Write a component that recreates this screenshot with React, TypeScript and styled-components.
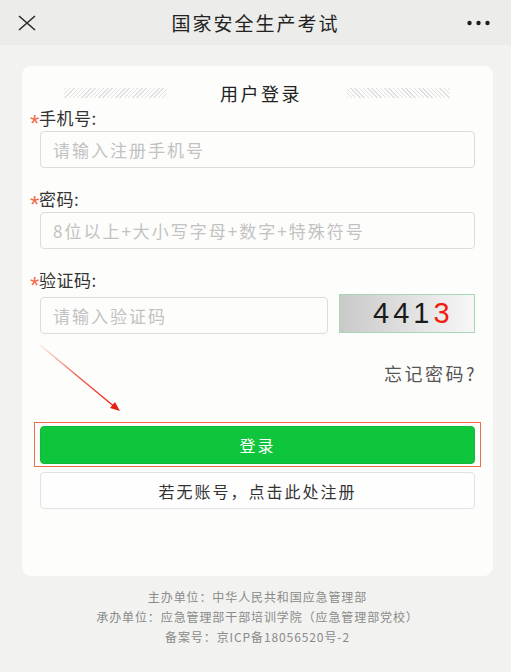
import React from "react";
import styled, { createGlobalStyle } from "styled-components";

const Global = createGlobalStyle`
  html, body { margin: 0; padding: 0; background: #f2f2f0; }
  body { font-family: "Noto Sans CJK SC", "Noto Sans", sans-serif; color: #333; }
  * { box-sizing: border-box; }
  input::placeholder { color: #c2c2c2; }
`;

const Page = styled.div`
  width: 511px;
  min-height: 672px;
  background: #f2f2f0;
`;

const TopBar = styled.div`
  height: 45px;
  background: #ececea;
  display: grid;
  grid-template-columns: 60px 1fr 60px;
  align-items: center;
`;

const IconBtn = styled.div<{ $align: "start" | "end" }>`
  display: flex;
  justify-content: ${(p) => (p.$align === "start" ? "flex-start" : "flex-end")};
  padding: ${(p) => (p.$align === "start" ? "0 0 0 17px" : "0 21px 0 0")};
  align-items: center;
`;

const BarTitle = styled.div`
  text-align: center;
  font-size: 19px;
  letter-spacing: 2px;
  color: #222;
  line-height: 45px;
`;

const Content = styled.div`
  padding: 21px 18px 0 22px;
`;

const Card = styled.div`
  position: relative;
  background: #fdfdfb;
  border-radius: 9px;
  padding: 14px 18px 67px 8px;
`;

const TitleRow = styled.div`
  display: flex;
  align-items: center;
  justify-content: space-between;
  height: 26px;
  padding: 0 25px 0 34px;
`;

const Hatch = styled.div<{ $dir: "left" | "right" }>`
  width: 103px;
  height: 10px;
  background: repeating-linear-gradient(
    ${(p) => (p.$dir === "left" ? "-45deg" : "45deg")},
    #e0e0e0 0 1px,
    transparent 1px 3px
  );
`;

const CardTitle = styled.div`
  font-size: 18px;
  letter-spacing: 2.5px;
  color: #222;
  line-height: 26px;
  padding-left: 8px;
`;

const Label = styled.div<{ $gap: number }>`
  margin-top: ${(p) => p.$gap}px;
  font-size: 17px;
  line-height: 22px;
  height: 22px;
  color: #333;
  letter-spacing: 0.5px;
  display: flex;
  align-items: center;
`;

const Star = styled.span`
  color: #f26a4b;
  font-family: "Liberation Sans", sans-serif;
  font-size: 24px;
  line-height: 22px;
  height: 22px;
  width: 9px;
  padding-top: 6px;
  display: inline-block;
  overflow: visible;
`;

const Field = styled.input<{ $grow?: boolean }>`
  display: block;
  width: ${(p) => (p.$grow ? "auto" : "435px")};
  flex: ${(p) => (p.$grow ? "1" : "none")};
  height: 37px;
  margin: 2px 0 0 10px;
  border: 1px solid #dcdcdc;
  border-radius: 4px;
  background: #fdfdfb;
  padding: 0 12px;
  font-family: inherit;
  font-size: 17px;
  letter-spacing: 2px;
  outline: none;
`;

const CodeRow = styled.div`
  display: flex;
  align-items: flex-end;
  gap: 11px;
  margin-top: 3px;
  & > input { margin-top: 0; }
`;

const Captcha = styled.div`
  width: 136px;
  height: 39px;
  margin-bottom: 1px;
  border: 1px solid #a6d8b5;
  background: linear-gradient(90deg, #c9c9c9 0%, #e2e2e2 55%, #f7f7f7 100%);
  font-family: "Liberation Sans", "DejaVu Sans", sans-serif;
  font-size: 29px;
  letter-spacing: 4px;
  color: #1a1a1a;
  line-height: 37px;
  padding-left: 33px;
  white-space: nowrap;
`;

const Red = styled.span`
  color: #f01e0e;
`;

const Forgot = styled.div`
  margin-top: 27px;
  text-align: right;
  font-size: 18px;
  letter-spacing: 2.5px;
  line-height: 24px;
  color: #555;
  margin-right: -2px;
`;

const LoginWrap = styled.div`
  position: relative;
  margin: 41px 0 0 10px;
`;

const Highlight = styled.div`
  position: absolute;
  left: -6px;
  right: -6px;
  top: -4px;
  bottom: -3px;
  border: 1.5px solid #f2684e;
  pointer-events: none;
`;

const Btn = styled.button<{ $primary?: boolean }>`
  display: block;
  width: 435px;
  height: ${(p) => (p.$primary ? "38px" : "37px")};
  border-radius: 4px;
  border: 1px solid ${(p) => (p.$primary ? "#10b93a" : "#e2e2e2")};
  background: ${(p) => (p.$primary ? "#0fc53c" : "#fefefe")};
  color: ${(p) => (p.$primary ? "#fff" : "#333")};
  font-family: inherit;
  font-size: 16px;
  letter-spacing: 2px;
  padding: 0;
`;

const RegisterBtn = styled(Btn)`
  margin: 8px 0 0 10px;
`;

const Arrow = styled.svg`
  position: absolute;
  left: 14px;
  top: 276px;
  overflow: visible;
`;

const Footer = styled.div`
  margin-top: 11px;
  text-align: center;
  font-size: 12px;
  line-height: 20px;
  letter-spacing: 0.9px;
  color: #8a8a8a;
`;

export default function App() {
  return (
    <Page>
      <Global />
      <TopBar>
        <IconBtn $align="start">
          <svg width="20" height="20" viewBox="0 0 20 20">
            <path d="M2 3 L18 17 M18 3 L2 17" stroke="#2a2a2a" strokeWidth="1.6" fill="none" />
          </svg>
        </IconBtn>
        <BarTitle>国家安全生产考试</BarTitle>
        <IconBtn $align="end">
          <svg width="23" height="6" viewBox="0 0 23 6">
            <circle cx="2.5" cy="3" r="2.2" fill="#1e1e1e" />
            <circle cx="11.5" cy="3" r="2.2" fill="#1e1e1e" />
            <circle cx="20.5" cy="3" r="2.2" fill="#1e1e1e" />
          </svg>
        </IconBtn>
      </TopBar>
      <Content>
        <Card>
          <TitleRow>
            <Hatch $dir="left" />
            <CardTitle>用户登录</CardTitle>
            <Hatch $dir="right" />
          </TitleRow>

          <Label $gap={1}>
            <Star>*</Star>手机号:
          </Label>
          <Field placeholder="请输入注册手机号" />

          <Label $gap={20}>
            <Star>*</Star>密码:
          </Label>
          <Field placeholder="8位以上+大小写字母+数字+特殊符号" />

          <Label $gap={20}>
            <Star>*</Star>验证码:
          </Label>
          <CodeRow>
            <Field $grow placeholder="请输入验证码" />
            <Captcha>
              441<Red>3</Red>
            </Captcha>
          </CodeRow>

          <Forgot>忘记密码?</Forgot>

          <LoginWrap>
            <Btn $primary>登录</Btn>
            <Highlight />
          </LoginWrap>
          <RegisterBtn>若无账号，点击此处注册</RegisterBtn>

          <Arrow width="90" height="75" viewBox="0 0 90 75">
            <defs>
              <linearGradient id="ag" x1="0" y1="0" x2="1" y2="1">
                <stop offset="0" stopColor="#f04030" stopOpacity="0.1" />
                <stop offset="0.5" stopColor="#ee3322" stopOpacity="0.8" />
                <stop offset="1" stopColor="#e8200f" />
              </linearGradient>
            </defs>
            <path d="M4 3 L80 66" stroke="url(#ag)" strokeWidth="1.4" fill="none" />
            <path d="M84 69 L74 66 L79 60 Z" fill="#e8200f" />
          </Arrow>
        </Card>
        <Footer>
          <div>主办单位：中华人民共和国应急管理部</div>
          <div>承办单位：应急管理部干部培训学院（应急管理部党校）</div>
          <div>备案号：京ICP备18056520号-2</div>
        </Footer>
      </Content>
    </Page>
  );
}
